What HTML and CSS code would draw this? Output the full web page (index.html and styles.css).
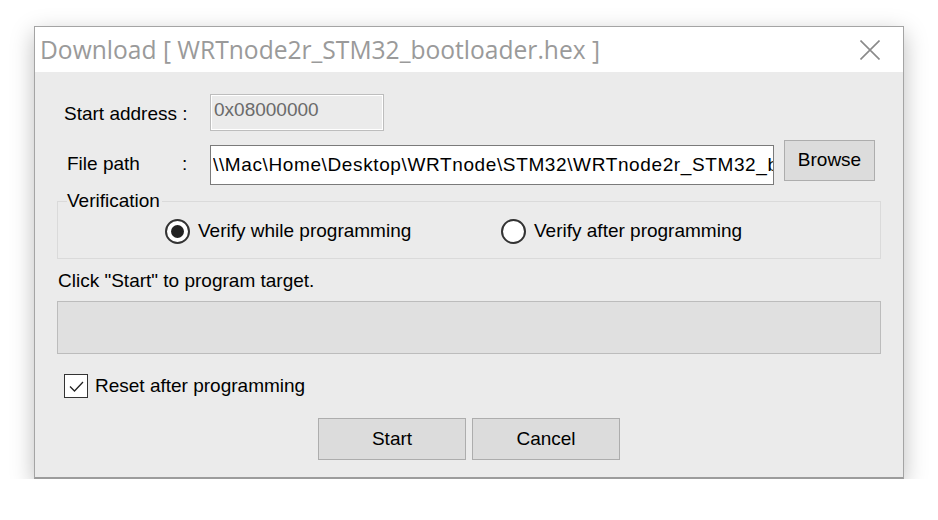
FILE: index.html
```html
<!DOCTYPE html>
<html>
<head>
<meta charset="utf-8">
<link rel="stylesheet" href="styles.css">
</head>
<body>
<div class="window">
  <div class="titlebar">
    <span class="title">Download [ WRTnode2r_STM32_bootloader.hex ]</span>
    <svg class="close" width="20" height="20" viewBox="0 0 20 20"><path d="M0.5 0.5 L19.5 19.5 M19.5 0.5 L0.5 19.5" stroke="#8a8a8a" stroke-width="1.6" fill="none"/></svg>
  </div>
  <div class="client">
    <div class="row row-addr">
      <span class="label label-addr">Start address :</span>
      <div class="field field-disabled">0x08000000</div>
    </div>
    <div class="row row-path">
      <span class="label label-path">File path</span>
      <span class="colon">:</span>
      <div class="field field-path"><span class="path-text">\\Mac\Home\Desktop\WRTnode\STM32\WRTnode2r_STM32_bootloader.hex</span></div>
      <div class="btn btn-browse">Browse</div>
    </div>
    <fieldset class="group">
      <legend class="legend">Verification</legend>
      <div class="radios">
        <div class="radio-item radio-1"><span class="radio checked"></span><span>Verify while programming</span></div>
        <div class="radio-item radio-2"><span class="radio"></span><span>Verify after programming</span></div>
      </div>
    </fieldset>
    <div class="status">Click "Start" to program target.</div>
    <div class="progress"></div>
    <div class="check-row">
      <span class="checkbox"><svg width="21" height="21" viewBox="0 0 21 21"><path d="M4 10.5 L8.5 15 L17 6" stroke="#222" stroke-width="1.3" fill="none"/></svg></span>
      <span>Reset after programming</span>
    </div>
    <div class="buttons">
      <div class="btn btn-action">Start</div>
      <div class="btn btn-action">Cancel</div>
    </div>
  </div>
</div>
</body>
</html>
```
FILE: styles.css
```css
html, body {
  margin: 0;
  padding: 0;
  background: #ffffff;
}
body {
  padding: 26px 0 0 34px;
  font-family: "Liberation Sans", Arial, sans-serif;
  font-size: 19px;
  color: #000;
}
.window {
  width: 868px;
  height: 450px;
  border: 1px solid #a4a4a4;
  border-bottom: 2px solid #9c9c9c;
  background: #ebebeb;
  box-shadow: 0 7px 22px rgba(0,0,0,0.26);
  display: flex;
  flex-direction: column;
}
.titlebar {
  height: 45px;
  background: #ffffff;
  display: flex;
  align-items: center;
  justify-content: space-between;
  padding: 0 23px 0 5px;
  flex: none;
}
.title {
  font-family: "Open Sans", "Noto Sans", sans-serif;
  font-size: 24.6px;
  color: #9a9a9a;
  white-space: nowrap;
  margin-top: -1px;
}
.close {
  display: block;
  margin-top: 1px;
}
.client {
  padding: 22px 22px 0 22px;
  display: flex;
  flex-direction: column;
}
.row {
  display: flex;
  align-items: center;
}
.row-addr {
  height: 37px;
}
.label-addr {
  margin-left: 7px;
  width: 146px;
  margin-top: 2px;
}
.field {
  box-sizing: border-box;
  white-space: nowrap;
  overflow: hidden;
}
.field-disabled {
  width: 174px;
  height: 37px;
  border: 1px solid #bdbdbd;
  box-shadow: inset 0 0 0 1px #ffffff;
  color: #6a6a6a;
  padding: 3px 0 0 3px;
  line-height: 24px;
}
.row-path {
  margin-top: 8px;
  height: 44px;
}
.label-path {
  margin-left: 10px;
  width: 115px;
  margin-top: 5px;
}
.colon {
  width: 28px;
  margin-top: 5px;
}
.field-path {
  width: 564px;
  height: 40px;
  margin-top: 7px;
  background: #ffffff;
  border: 1px solid #7a7a7a;
  padding: 0 0 0 2px;
  line-height: 37px;
}
.path-text {
  display: block;
  overflow: hidden;
  letter-spacing: 0.62px;
}
.btn {
  box-sizing: border-box;
  background: #dcdcdc;
  border: 1px solid #adadad;
  display: flex;
  align-items: center;
  justify-content: center;
}
.btn-browse {
  width: 91px;
  height: 41px;
  margin-left: 10px;
  margin-top: -2px;
}
.group {
  margin: 18px 0 0 0;
  padding: 0;
  border: 1px solid #dadada;
  height: 58px;
  box-sizing: border-box;
  position: relative;
}
.legend {
  padding: 0 2px 0 0;
  margin-left: 8px;
  line-height: 20px;
  position: absolute;
  top: -11px;
  left: 1px;
  background: #ebebeb;
}
.radios {
  display: flex;
  height: 56px;
  align-items: center;
  padding-top: 1px;
}
.radio-item {
  display: flex;
  align-items: center;
}
.radio-1 {
  margin-left: 107px;
  width: 336px;
}
.radio {
  box-sizing: border-box;
  width: 25px;
  height: 25px;
  border-radius: 50%;
  border: 2px solid #333333;
  background: #ffffff;
  margin-right: 8px;
  display: flex;
  align-items: center;
  justify-content: center;
}
.radio.checked::after {
  content: "";
  width: 13px;
  height: 13px;
  border-radius: 50%;
  background: #222222;
}
.status {
  margin-top: 11px;
  margin-left: 1px;
  height: 22px;
  line-height: 22px;
}
.progress {
  margin-top: 9px;
  height: 53px;
  box-sizing: border-box;
  background: #e0e0e0;
  border: 1px solid #bcbcbc;
}
.check-row {
  margin-top: 20px;
  margin-left: 7px;
  display: flex;
  align-items: center;
  height: 24px;
}
.checkbox {
  box-sizing: border-box;
  width: 24px;
  height: 24px;
  border: 1px solid #333333;
  background: #ffffff;
  margin-right: 7px;
  display: flex;
  align-items: center;
  justify-content: center;
}
.checkbox svg {
  display: block;
}
.buttons {
  margin-top: 20px;
  display: flex;
  justify-content: center;
  gap: 6px;
}
.btn-action {
  width: 148px;
  height: 42px;
}
```
